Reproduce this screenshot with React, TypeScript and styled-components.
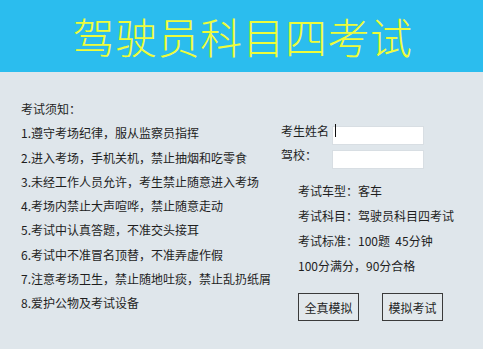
import styled, { createGlobalStyle } from "styled-components";

const RULES = [
  "1.遵守考场纪律，服从监察员指挥",
  "2.进入考场，手机关机，禁止抽烟和吃零食",
  "3.未经工作人员允许，考生禁止随意进入考场",
  "4.考场内禁止大声喧哗，禁止随意走动",
  "5.考试中认真答题，不准交头接耳",
  "6.考试中不准冒名顶替，不准弄虚作假",
  "7.注意考场卫生，禁止随地吐痰，禁止乱扔纸屑",
  "8.爱护公物及考试设备",
];

const INFO = [
  "考试车型：客车",
  "考试科目：驾驶员科目四考试",
  "考试标准：100题\u00a0 45分钟",
  "100分满分，90分合格",
];

const App = function App() {
  return (
    <>
      <GlobalStyle />
      <Style.Page>
        <Style.Header>
          <Style.Title>驾驶员科目四考试</Style.Title>
        </Style.Header>
        <Style.Main>
          <Style.RuleList>
            <Style.Line>考试须知：</Style.Line>
            {RULES.map((rule) => (
              <Style.Line key={rule}>{rule}</Style.Line>
            ))}
          </Style.RuleList>
          <Style.Side>
            <Style.Form>
              <Style.Label>考生姓名</Style.Label>
              <Style.InputWrap>
                <Style.Input />
                <Style.Caret />
              </Style.InputWrap>
              <Style.Label>驾校：</Style.Label>
              <Style.InputWrap>
                <Style.Input />
              </Style.InputWrap>
            </Style.Form>
            <Style.Info>
              {INFO.map((line) => (
                <Style.InfoLine key={line}>{line}</Style.InfoLine>
              ))}
            </Style.Info>
            <Style.Buttons>
              <Style.Button>全真模拟</Style.Button>
              <Style.Button>模拟考试</Style.Button>
            </Style.Buttons>
          </Style.Side>
        </Style.Main>
      </Style.Page>
    </>
  );
};

export default App;

const GlobalStyle = createGlobalStyle`
  html, body {
    margin: 0;
    padding: 0;
    background: #dfe6eb;
  }
  body {
    font-family: "Noto Sans CJK SC", "DejaVu Sans", sans-serif;
    color: #1e1e1e;
  }
`;

const Style = {
  Page: styled.div`
    width: 483px;
    height: 349px;
    overflow: hidden;
    background: #dfe6eb;
  `,
  Header: styled.header`
    height: 72px;
    background: #2bbdee;
    display: flex;
    align-items: center;
    justify-content: center;
  `,
  Title: styled.h1`
    margin: 0;
    font-family: "Noto Sans CJK SC", sans-serif;
    font-weight: 300;
    font-size: 42px;
    line-height: 1;
    color: #eefc3a;
    letter-spacing: 0.5px;
    padding-left: 2px;
  `,
  Main: styled.main`
    display: grid;
    grid-template-columns: 281px 1fr;
  `,
  RuleList: styled.div`
    padding: 25px 0 0 21px;
    display: flex;
    flex-direction: column;
  `,
  Line: styled.div`
    font-size: 12px;
    line-height: 24.3px;
    white-space: nowrap;
  `,
  Side: styled.div`
    padding-top: 49px;
    display: flex;
    flex-direction: column;
  `,
  Form: styled.div`
    display: grid;
    grid-template-columns: 51px 92px;
    grid-auto-rows: 19px;
    row-gap: 5px;
    align-items: center;
  `,
  Label: styled.span`
    font-size: 12px;
    white-space: nowrap;
  `,
  InputWrap: styled.div`
    position: relative;
    height: 19px;
  `,
  Input: styled.input`
    box-sizing: border-box;
    width: 92px;
    height: 19px;
    margin: 0;
    padding: 0 3px;
    border: 1px solid #d8dee3;
    background: #ffffff;
    outline: none;
  `,
  Caret: styled.span`
    position: absolute;
    left: 3px;
    top: 3px;
    width: 1px;
    height: 13px;
    background: #111;
  `,
  Info: styled.div`
    margin-top: 14px;
    padding-left: 17px;
  `,
  InfoLine: styled.div`
    font-size: 12px;
    line-height: 25px;
    white-space: nowrap;
  `,
  Buttons: styled.div`
    margin-top: 15px;
    padding-left: 17px;
    display: flex;
    gap: 23px;
  `,
  Button: styled.button`
    box-sizing: border-box;
    width: 61px;
    height: 28px;
    margin: 0;
    padding: 0;
    border: 1px solid #3a3a3a;
    background: #e2e8ec;
    font-family: "Noto Sans CJK SC", sans-serif;
    font-size: 12px;
    color: #1e1e1e;
  `,
};
